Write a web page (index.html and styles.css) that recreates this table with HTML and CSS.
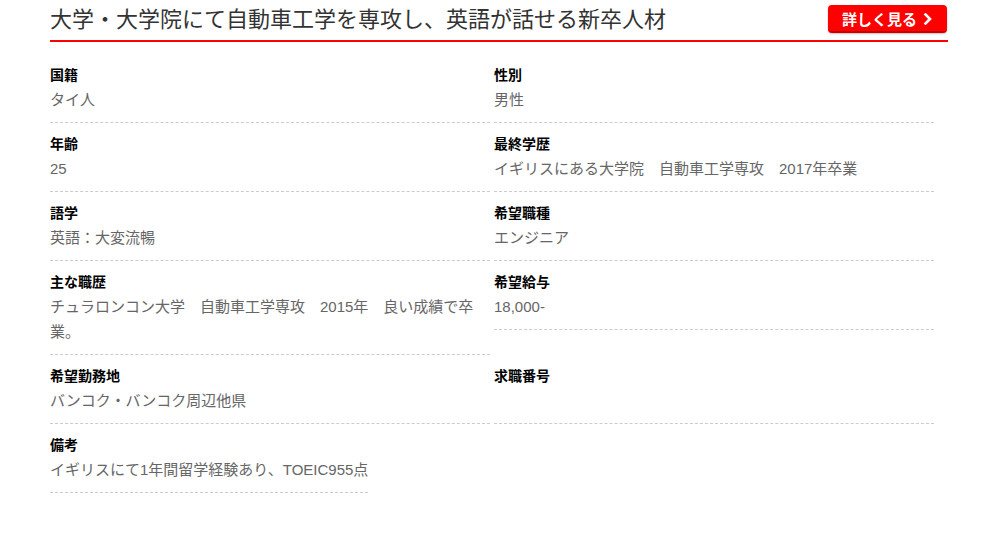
FILE: index.html
```html
<!DOCTYPE html>
<html lang="ja">
<head>
<meta charset="utf-8">
<link rel="stylesheet" href="styles.css">
</head>
<body>
<div class="wrap">
  <div class="head">
    <h2 class="title">大学・大学院にて自動車工学を専攻し、英語が話せる新卒人材</h2>
    <a class="btn" href="#">詳しく見る<svg class="chev" width="10" height="12" viewBox="0 0 10 12"><polyline points="2.5,1.5 7,6 2.5,10.5" fill="none" stroke="#fff" stroke-width="2.6" stroke-linecap="square" stroke-linejoin="miter"/></svg></a>
  </div>
  <div class="grid">
    <div class="item"><div class="lbl">国籍</div><div class="val">タイ人</div></div>
    <div class="item"><div class="lbl">性別</div><div class="val">男性</div></div>
    <div class="item"><div class="lbl">年齢</div><div class="val">25</div></div>
    <div class="item"><div class="lbl">最終学歴</div><div class="val">イギリスにある大学院　自動車工学専攻　2017年卒業</div></div>
    <div class="item"><div class="lbl">語学</div><div class="val">英語：大変流暢</div></div>
    <div class="item"><div class="lbl">希望職種</div><div class="val">エンジニア</div></div>
    <div class="item"><div class="lbl">主な職歴</div><div class="val">チュラロンコン大学　自動車工学専攻　2015年　良い成績で卒業。</div></div>
    <div class="item"><div class="lbl">希望給与</div><div class="val">18,000-</div></div>
    <div class="item"><div class="lbl">希望勤務地</div><div class="val">バンコク・バンコク周辺他県</div></div>
    <div class="item"><div class="lbl">求職番号</div><div class="val"></div></div>
    <div class="item item--fit"><div class="lbl">備考</div><div class="val">イギリスにて1年間留学経験あり、TOEIC955点</div></div>
  </div>
</div>
</body>
</html>
```
FILE: styles.css
```css
* { box-sizing: border-box; }
html, body { margin: 0; padding: 0; background: #fff; }
body {
  font-family: "Liberation Sans", "Noto Sans CJK JP", sans-serif;
}
.wrap {
  width: 898px;
  margin-left: 50px;
}
.head {
  display: flex;
  justify-content: space-between;
  align-items: flex-start;
  height: 42px;
  border-bottom: 2px solid #f00;
}
.title {
  margin: 5px 0 0;
  font-size: 22px;
  line-height: 30px;
  font-weight: normal;
  color: #333;
  letter-spacing: 0;
}
.btn {
  margin: 5px 1px 0 0;
  height: 28px;
  width: 119px;
  display: flex;
  align-items: center;
  justify-content: center;
  gap: 6px;
  background: #f00;
  color: #fff;
  font-weight: bold;
  font-size: 15px;
  text-decoration: none;
  border-radius: 4px;
  border-bottom: 2px solid #c80000;
  box-shadow: 0 1px 2px rgba(0,0,0,0.25);
  padding-top: 1px;
}
.chev { display: block; }
.grid {
  margin-top: 12px;
  display: grid;
  grid-template-columns: 440px 440px;
  column-gap: 4px;
  align-items: start;
}
.item {
  padding: 11px 0 10px;
  border-bottom: 1px dashed #ccc;
}
.item--fit { justify-self: start; }
.lbl {
  font-size: 14px;
  line-height: 20px;
  font-weight: bold;
  color: #000;
}
.val {
  margin-top: 2px;
  font-size: 15px;
  line-height: 25px;
  color: #666;
  min-height: 25px;
}
```
